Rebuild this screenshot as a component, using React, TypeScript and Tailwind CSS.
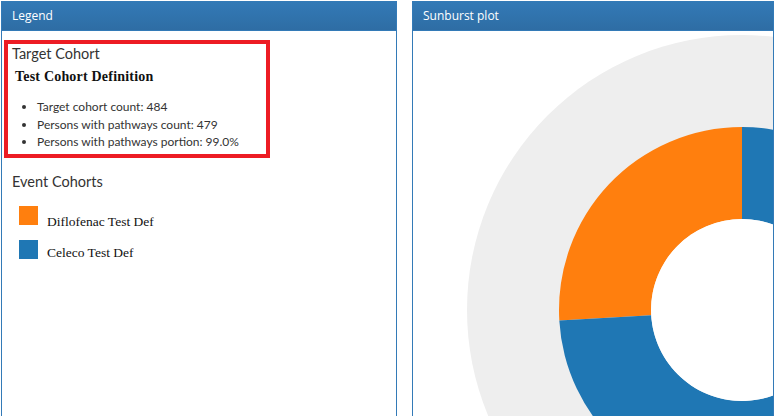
const sans = "font-['Segoe_UI','Open_Sans',sans-serif]";
const body = "font-['Lato',sans-serif]";
const serif = "font-['Liberation_Serif',serif]";

function PanelHeader({ title }: { title: string }) {
  return (
    <div className={`h-[29px] flex items-center px-[10px] bg-gradient-to-b from-[#337ab7] to-[#2e6da4] text-white text-[12px] ${sans}`}>
      {title}
    </div>
  );
}

function Sunburst() {
  return (
    <svg width="360" height="400" className="block">
      <circle cx="329" cy="279" r="275" fill="#eeeeee" />
      <path
        d="M 146.3 289.5 A 183 183 0 0 1 329 96 L 329 188 A 91 91 0 0 0 238.2 284.2 Z"
        fill="#ff7f0e"
      />
      <path
        d="M 329 96 A 183 183 0 1 1 146.3 289.5 L 238.2 284.2 A 91 91 0 1 0 329 188 Z"
        fill="#1f77b4"
      />
      <circle cx="329" cy="279" r="91" fill="#ffffff" />
    </svg>
  );
}

export default function App() {
  const stats = [
    "Target cohort count: 484",
    "Persons with pathways count: 479",
    "Persons with pathways portion: 99.0%",
  ];
  const events = [
    { name: "Diflofenac Test Def", color: "bg-[#ff7f0e]", offset: "mt-[8px]" },
    { name: "Celeco Test Def", color: "bg-[#1f77b4]", offset: "mt-[5px]" },
  ];

  return (
    <div className={`h-[416px] w-[775px] overflow-hidden bg-white flex gap-[15px] pt-px pl-px ${body}`}>
      <div className="w-[396px] h-[500px] border border-[#337ab7] border-t-0 flex flex-col">
        <PanelHeader title="Legend" />
        <div className="border-t border-[#337ab7]" />
        <div className="pl-[2px] pt-[9px]">
          <div className="w-[266px] border-4 border-[#ed1c24] pl-[4px] pt-[1px] pb-[3px]">
            <div className="text-[14.5px] text-[#333] leading-[18px]">Target Cohort</div>
            <div className={`${serif} font-bold text-[14px] tracking-[0.2px] text-[#111] pl-[3px] mt-[5px] leading-[18px]`}>
              Test Cohort Definition
            </div>
            <ul className="list-disc pl-[25px] mt-[12px] text-[12px] text-[#333] leading-[17.5px]">
              {stats.map((s) => (
                <li key={s}>{s}</li>
              ))}
            </ul>
          </div>
          <div className="pl-[8px] mt-[15px] text-[14.5px] text-[#333] leading-[18px]">Event Cohorts</div>
          <div className="pl-[15px] mt-[15px] flex flex-col gap-[15px]">
            {events.map((e) => (
              <div key={e.name} className="h-[19px] flex items-start gap-[9px]">
                <div className={`w-[19px] h-[19px] ${e.color}`} />
                <div className={`${serif} text-[13.5px] text-[#111] leading-[16px] ${e.offset}`}>
                  {e.name}
                </div>
              </div>
            ))}
          </div>
        </div>
      </div>
      <div className="w-[362px] h-[500px] border border-[#337ab7] border-t-0 flex flex-col">
        <PanelHeader title="Sunburst plot" />
        <div className="border-t border-[#337ab7]" />
        <Sunburst />
      </div>
    </div>
  );
}
